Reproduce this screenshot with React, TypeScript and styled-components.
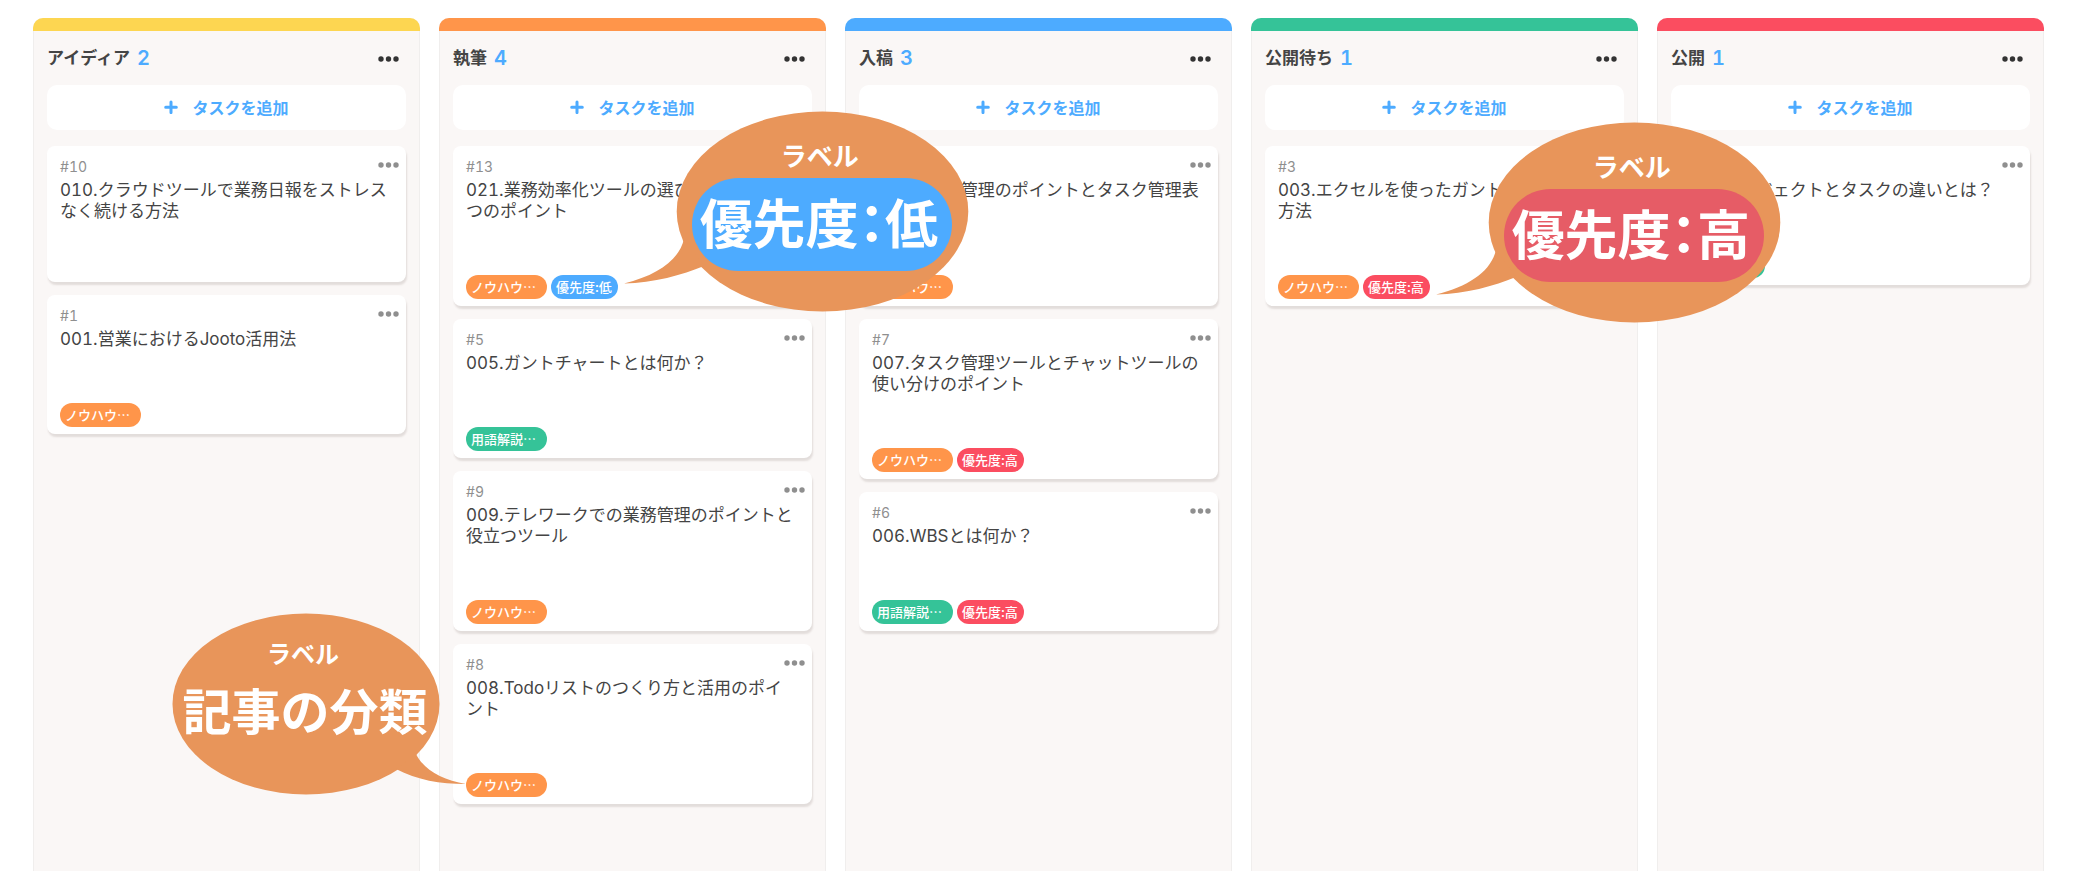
import React from "react";
import styled, { createGlobalStyle } from "styled-components";

const colors = {
  yellow: "#fdd651",
  orange: "#ff954a",
  blue: "#4dabff",
  green: "#35c398",
  red: "#fb4d60",
  balloon: "#e8955a",
  balloonRed: "#e65c66",
  text: "#444444",
};

const GlobalStyle = createGlobalStyle`
  *, *::before, *::after { box-sizing: border-box; }
  body {
    margin: 0;
    background: #ffffff;
    color: ${colors.text};
    font-family: Inter, "Noto Sans CJK JP", sans-serif;
    font-variant-numeric: tabular-nums;
  }
  h2, h3, p, ul { margin: 0; padding: 0; }
  ul { list-style: none; }
  button { font: inherit; border: 0; padding: 0; cursor: pointer; }
`;

const Board = styled.main`
  display: grid;
  grid-template-columns: repeat(5, minmax(0, 1fr));
  gap: 19px;
  min-height: 100vh;
  padding: 18px 36px 0 33px;
`;

const Column = styled.section<{ $accent: string }>`
  background: #faf7f6;
  border: solid #f0eeed;
  border-width: 0 1px;
  border-radius: 10px 10px 0 0;

  &::before {
    content: "";
    display: block;
    height: 13px;
    margin: 0 -1px;
    border-radius: 10px 10px 0 0;
    background: ${(p) => p.$accent};
  }
`;

const ColumnHeader = styled.header`
  display: flex;
  align-items: center;
  justify-content: space-between;
  height: 54px;
  padding: 0 20px 0 13px;
`;

const ColumnTitle = styled.h2`
  display: flex;
  align-items: center;
  gap: 7px;
  font-size: 17px;
  font-weight: 700;
  line-height: 24px;
`;

const Count = styled.span`
  color: ${colors.blue};
  font-size: 20px;
  font-weight: 600;
`;

const MenuButton = styled.button<{ $color: string }>`
  display: flex;
  padding-top: 2px;
  background: none;
  color: ${(p) => p.$color};
`;

const AddButton = styled.button`
  display: flex;
  align-items: center;
  justify-content: center;
  gap: 14px;
  width: calc(100% - 26px);
  height: 45px;
  margin: 0 13px 16px;
  padding-bottom: 2px;
  border-radius: 10px;
  background: #ffffff;
  color: ${colors.blue};
  font-size: 16px;
  font-weight: 700;
`;

const CardList = styled.ul`
  display: flex;
  flex-direction: column;
  gap: 13px;
  padding: 0 13px 24px;
`;

const Card = styled.li`
  padding: 11px 14px 7px 13px;
  border-radius: 8px;
  background: #ffffff;
  box-shadow: 1px 3px 2px rgba(70, 50, 40, 0.13);
`;

const CardTop = styled.div`
  display: flex;
  align-items: flex-start;
  justify-content: space-between;
  height: 21px;
  margin-right: -7px;
  padding-top: 3px;
  color: #8f8f8f;
  font-size: 14px;
  line-height: 14px;
`;

const CardTitle = styled.h3`
  margin: 2px 0 53px;
  font-size: 17px;
  font-weight: 400;
  line-height: 21px;
`;

const Labels = styled.div`
  display: flex;
  gap: 4px;
`;

const Label = styled.span<{ $color: string; $truncated: boolean }>`
  position: relative;
  height: 24px;
  min-width: ${(p) => (p.$truncated ? "81px" : "0")};
  padding: 0 6px 0 5px;
  border-radius: 12px;
  background: ${(p) => p.$color};
  color: #ffffff;
  font-family: "Noto Sans CJK JP", sans-serif;
  font-size: 13px;
  font-weight: 500;
  line-height: 23px;
`;

const RightBalloon = styled.div<{ $drop: number }>`
  position: absolute;
  z-index: 2;
  left: calc(100% + 6px);
  bottom: ${(p) => -p.$drop}px;
  display: flex;
  flex-direction: column;
  align-items: center;
  width: 346px;
  height: 201px;
  padding: 24px 18px 0 68px;
`;

const LeftBalloon = styled.div`
  position: absolute;
  z-index: 2;
  right: 100%;
  bottom: 2px;
  display: flex;
  flex-direction: column;
  align-items: center;
  width: 294px;
  height: 182px;
  padding: 20px 28px 0 0;
`;

const BalloonShape = styled.svg`
  position: absolute;
  inset: 0;
  fill: ${colors.balloon};
`;

const BalloonCaption = styled.span<{ $size: number }>`
  position: relative;
  padding-right: 4px;
  font-size: ${(p) => p.$size}px;
  font-weight: 700;
  line-height: 40px;
`;

const BalloonPill = styled.strong<{ $color: string }>`
  position: relative;
  width: 100%;
  height: 93px;
  margin-top: 3px;
  padding-right: 6px;
  border-radius: 47px;
  background: ${(p) => p.$color};
  font-family: "Noto Sans CJK JP", sans-serif;
  font-size: 53px;
  font-weight: 700;
  font-feature-settings: "halt";
  line-height: 86px;
  text-align: center;
  white-space: nowrap;
`;

const BalloonText = styled.strong`
  position: relative;
  font-size: 49px;
  font-weight: 700;
  line-height: 72px;
  white-space: nowrap;
`;

const Dots = () => (
  <svg width="21" height="6" viewBox="0 0 21 6" fill="currentColor" aria-hidden="true">
    <circle cx="3" cy="3" r="2.7" />
    <circle cx="10.5" cy="3" r="2.7" />
    <circle cx="18" cy="3" r="2.7" />
  </svg>
);

const Plus = () => (
  <svg width="14" height="14" viewBox="0 0 14 14" stroke="currentColor" strokeWidth="3" strokeLinecap="round" aria-hidden="true">
    <path d="M7 2v10.600M1.700 7.300h10.600" />
  </svg>
);

interface PriorityBalloonProps {
  text: string;
  color: string;
  drop: number;
}

const PriorityBalloon = ({ text, color, drop }: PriorityBalloonProps) => (
  <RightBalloon $drop={drop}>
    <BalloonShape width="346" height="201" viewBox="0 0 346 201" aria-hidden="true">
      <ellipse cx="198.500" cy="100.5" rx="145.800" ry="100" />
      <path d="M60 128C55 149 34 164 0 172.500C30 172 58 164 80 155Z" />
    </BalloonShape>
    <BalloonCaption $size={26}>ラベル</BalloonCaption>
    <BalloonPill $color={color}>{text}</BalloonPill>
  </RightBalloon>
);

const CategoryBalloon = () => (
  <LeftBalloon>
    <BalloonShape width="294" height="182" viewBox="0 0 294 182" aria-hidden="true">
      <ellipse cx="134" cy="91" rx="133.500" ry="90.500" />
      <path d="M244 141C252 157 270 167 294 171C268 171 245 167 224 156Z" />
    </BalloonShape>
    <BalloonCaption $size={24}>ラベル</BalloonCaption>
    <BalloonText>記事の分類</BalloonText>
  </LeftBalloon>
);

interface LabelData {
  text: string;
  color: string;
  balloon?: React.ReactNode;
}

interface Task {
  id: number;
  title: string;
  labels: LabelData[];
}

interface ColumnData {
  name: string;
  accent: string;
  tasks: Task[];
}

const knowHow: LabelData = { text: "ノウハウ…", color: colors.orange };
const glossary: LabelData = { text: "用語解説…", color: colors.green };
const low: LabelData = { text: "優先度:低", color: colors.blue };
const high: LabelData = { text: "優先度:高", color: colors.red };

const columns: ColumnData[] = [
  {
    name: "アイディア",
    accent: colors.yellow,
    tasks: [
      { id: 10, title: "010.クラウドツールで業務日報をストレスなく続ける方法", labels: [] },
      { id: 1, title: "001.営業におけるJooto活用法", labels: [knowHow] },
    ],
  },
  {
    name: "執筆",
    accent: colors.orange,
    tasks: [
      {
        id: 13,
        title: "021.業務効率化ツールの選び方と活用の3つのポイント",
        labels: [
          knowHow,
          { ...low, balloon: <PriorityBalloon text="優先度：低" color={colors.blue} drop={13} /> },
        ],
      },
      { id: 5, title: "005.ガントチャートとは何か？", labels: [glossary] },
      { id: 9, title: "009.テレワークでの業務管理のポイントと役立つツール", labels: [knowHow] },
      {
        id: 8,
        title: "008.Todoリストのつくり方と活用のポイント",
        labels: [{ ...knowHow, balloon: <CategoryBalloon /> }],
      },
    ],
  },
  {
    name: "入稿",
    accent: colors.blue,
    tasks: [
      { id: 12, title: "012.タスク管理のポイントとタスク管理表の作り方", labels: [knowHow] },
      { id: 7, title: "007.タスク管理ツールとチャットツールの使い分けのポイント", labels: [knowHow, high] },
      { id: 6, title: "006.WBSとは何か？", labels: [glossary, high] },
    ],
  },
  {
    name: "公開待ち",
    accent: colors.green,
    tasks: [
      {
        id: 3,
        title: "003.エクセルを使ったガントチャート作成方法",
        labels: [
          knowHow,
          { ...high, balloon: <PriorityBalloon text="優先度：高" color={colors.balloonRed} drop={24} /> },
        ],
      },
    ],
  },
  {
    name: "公開",
    accent: colors.red,
    tasks: [{ id: 2, title: "002.プロジェクトとタスクの違いとは？", labels: [glossary] }],
  },
];

const TaskCard = ({ task }: { task: Task }) => (
  <Card>
    <CardTop>
      <span>#{task.id}</span>
      <MenuButton type="button" $color="#8f8f8f" aria-label="タスクのメニュー">
        <Dots />
      </MenuButton>
    </CardTop>
    <CardTitle>{task.title}</CardTitle>
    <Labels>
      {task.labels.map((label) => (
        <Label key={label.text} $color={label.color} $truncated={label.text.endsWith("…")}>
          {label.text}
          {label.balloon}
        </Label>
      ))}
    </Labels>
  </Card>
);

export default function App() {
  return (
    <>
      <GlobalStyle />
      <Board lang="ja">
        {columns.map((column) => (
          <Column key={column.name} $accent={column.accent}>
            <ColumnHeader>
              <ColumnTitle>
                {column.name}
                <Count>{column.tasks.length}</Count>
              </ColumnTitle>
              <MenuButton type="button" $color="#333333" aria-label="リストのメニュー">
                <Dots />
              </MenuButton>
            </ColumnHeader>
            <AddButton type="button">
              <Plus />
              タスクを追加
            </AddButton>
            <CardList>
              {column.tasks.map((task) => (
                <TaskCard key={task.id} task={task} />
              ))}
            </CardList>
          </Column>
        ))}
      </Board>
    </>
  );
}
